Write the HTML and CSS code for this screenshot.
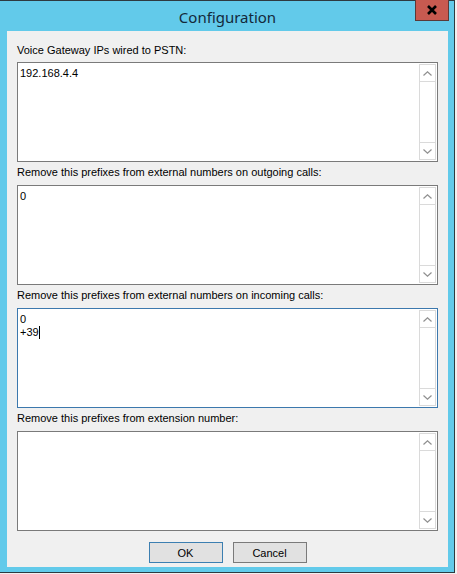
FILE: index.html
```html
<!DOCTYPE html>
<html lang="en">
<head>
    <meta charset="UTF-8">
    <title>Configuration</title>
    <link rel="stylesheet" href="styles.css">
</head>
<body>
    <div class="window">
        <!-- Title bar -->
        <div class="titlebar">
            <span class="title">Configuration</span>
            <div class="close-btn">
                <svg width="12" height="10" viewBox="0 0 12 10">
                    <path d="M2 1 L10 9 M10 1 L2 9" stroke="#000" stroke-width="2.6"/>
                </svg>
            </div>
        </div>

        <div class="client">
            <div class="field">
                <label>Voice Gateway IPs wired to PSTN:</label>
                <div class="textbox">
                    <div class="text">192.168.4.4</div>
                    <div class="scrollbar">
                        <div class="scroll-btn"><svg width="9" height="5" viewBox="0 0 9 5"><path d="M0.5 4.5 L4.5 0.8 L8.5 4.5" fill="none" stroke="#8f8f8f" stroke-width="1.2"/></svg></div>
                        <div class="scroll-track"></div>
                        <div class="scroll-btn"><svg width="9" height="5" viewBox="0 0 9 5"><path d="M0.5 0.5 L4.5 4.2 L8.5 0.5" fill="none" stroke="#8f8f8f" stroke-width="1.2"/></svg></div>
                    </div>
                </div>
            </div>

            <div class="field">
                <label>Remove this prefixes from external numbers on outgoing calls:</label>
                <div class="textbox">
                    <div class="text">0</div>
                    <div class="scrollbar">
                        <div class="scroll-btn"><svg width="9" height="5" viewBox="0 0 9 5"><path d="M0.5 4.5 L4.5 0.8 L8.5 4.5" fill="none" stroke="#8f8f8f" stroke-width="1.2"/></svg></div>
                        <div class="scroll-track"></div>
                        <div class="scroll-btn"><svg width="9" height="5" viewBox="0 0 9 5"><path d="M0.5 0.5 L4.5 4.2 L8.5 0.5" fill="none" stroke="#8f8f8f" stroke-width="1.2"/></svg></div>
                    </div>
                </div>
            </div>

            <div class="field">
                <label>Remove this prefixes from external numbers on incoming calls:</label>
                <div class="textbox focused">
                    <div class="text">0<br>+39<span class="caret"></span></div>
                    <div class="scrollbar">
                        <div class="scroll-btn"><svg width="9" height="5" viewBox="0 0 9 5"><path d="M0.5 4.5 L4.5 0.8 L8.5 4.5" fill="none" stroke="#8f8f8f" stroke-width="1.2"/></svg></div>
                        <div class="scroll-track"></div>
                        <div class="scroll-btn"><svg width="9" height="5" viewBox="0 0 9 5"><path d="M0.5 0.5 L4.5 4.2 L8.5 0.5" fill="none" stroke="#8f8f8f" stroke-width="1.2"/></svg></div>
                    </div>
                </div>
            </div>

            <div class="field">
                <label>Remove this prefixes from extension number:</label>
                <div class="textbox">
                    <div class="text"></div>
                    <div class="scrollbar">
                        <div class="scroll-btn"><svg width="9" height="5" viewBox="0 0 9 5"><path d="M0.5 4.5 L4.5 0.8 L8.5 4.5" fill="none" stroke="#8f8f8f" stroke-width="1.2"/></svg></div>
                        <div class="scroll-track"></div>
                        <div class="scroll-btn"><svg width="9" height="5" viewBox="0 0 9 5"><path d="M0.5 0.5 L4.5 4.2 L8.5 0.5" fill="none" stroke="#8f8f8f" stroke-width="1.2"/></svg></div>
                    </div>
                </div>
            </div>

            <!-- Dialog buttons -->
            <div class="buttons">
                <button class="btn default">OK</button>
                <button class="btn">Cancel</button>
            </div>
        </div>
    </div>
</body>
</html>
```

FILE: styles.css
```css
body {
    margin: 0;
    background-color: #f0f0f0;
    font-family: "Liberation Sans", Arial, sans-serif;
    font-size: 11px;
    color: #000;
}

.window {
    width: 454px;
    height: 571px;
    background-color: #62caea; /* Frame colour */
    border-top: 1px solid #2e3a40;
    border-right: 1px solid #2e3a40;
    border-bottom: 1px solid #2e3a40;
    display: flex;
    flex-direction: column;
}

.titlebar {
    height: 30px;
    display: flex;
    align-items: center;
    justify-content: center;
    position: relative;
}

.title {
    font-family: "Noto Sans", "Open Sans", sans-serif;
    font-size: 15px;
    color: #13293a;
    margin-left: 1px;
    margin-top: 1px;
}

.close-btn {
    position: absolute;
    top: -1px;
    right: 5px;
    width: 32px;
    height: 20px;
    background-color: #c75a50;
    border: 1px solid #5a3a38;
    border-top: none;
    display: flex;
    align-items: center;
    justify-content: center;
}

.client {
    margin: 0 6px 0 7px;
    flex: 1;
    background-color: #f0f0f0;
    padding: 13px 10px 0 10px;
    margin-bottom: 5px;
}

.field label {
    display: block;
    height: 13px;
    line-height: 13px;
    margin-bottom: 5px;
    white-space: nowrap;
}

.field + .field {
    margin-top: 4px;
}

.field + .field label {
    margin-bottom: 6px;
}

.textbox {
    height: 98px;
    background-color: #fff;
    border: 1px solid #7a7a7a;
    display: flex;
}

.textbox.focused {
    border-color: #3c78ad;
}

.text {
    flex: 1;
    padding: 4px 0 0 2px;
    line-height: 13px;
}

.caret {
    display: inline-block;
    width: 1px;
    height: 13px;
    background-color: #000;
    vertical-align: top;
}

.scrollbar {
    width: 17px;
    margin: 1px 1px 1px 0;
    display: flex;
    flex-direction: column;
    border-left: 1px solid #dadada;
    border-right: 1px solid #dadada;
    box-sizing: border-box;
}

.scroll-btn {
    height: 16px;
    border-top: 1px solid #dadada;
    border-bottom: 1px solid #dadada;
    display: flex;
    align-items: center;
    justify-content: center;
}

.scroll-track {
    flex: 1;
}

.buttons {
    display: flex;
    justify-content: center;
    gap: 10px;
    margin-top: 11px;
}

.btn {
    width: 74px;
    height: 21px;
    background-color: #e1e1e1;
    border: 1px solid #7a7a7a;
    font-family: "Liberation Sans", Arial, sans-serif;
    font-size: 11px;
    color: #000;
    padding: 0;
}

.btn.default {
    border-color: #3c7fb1;
}
```
